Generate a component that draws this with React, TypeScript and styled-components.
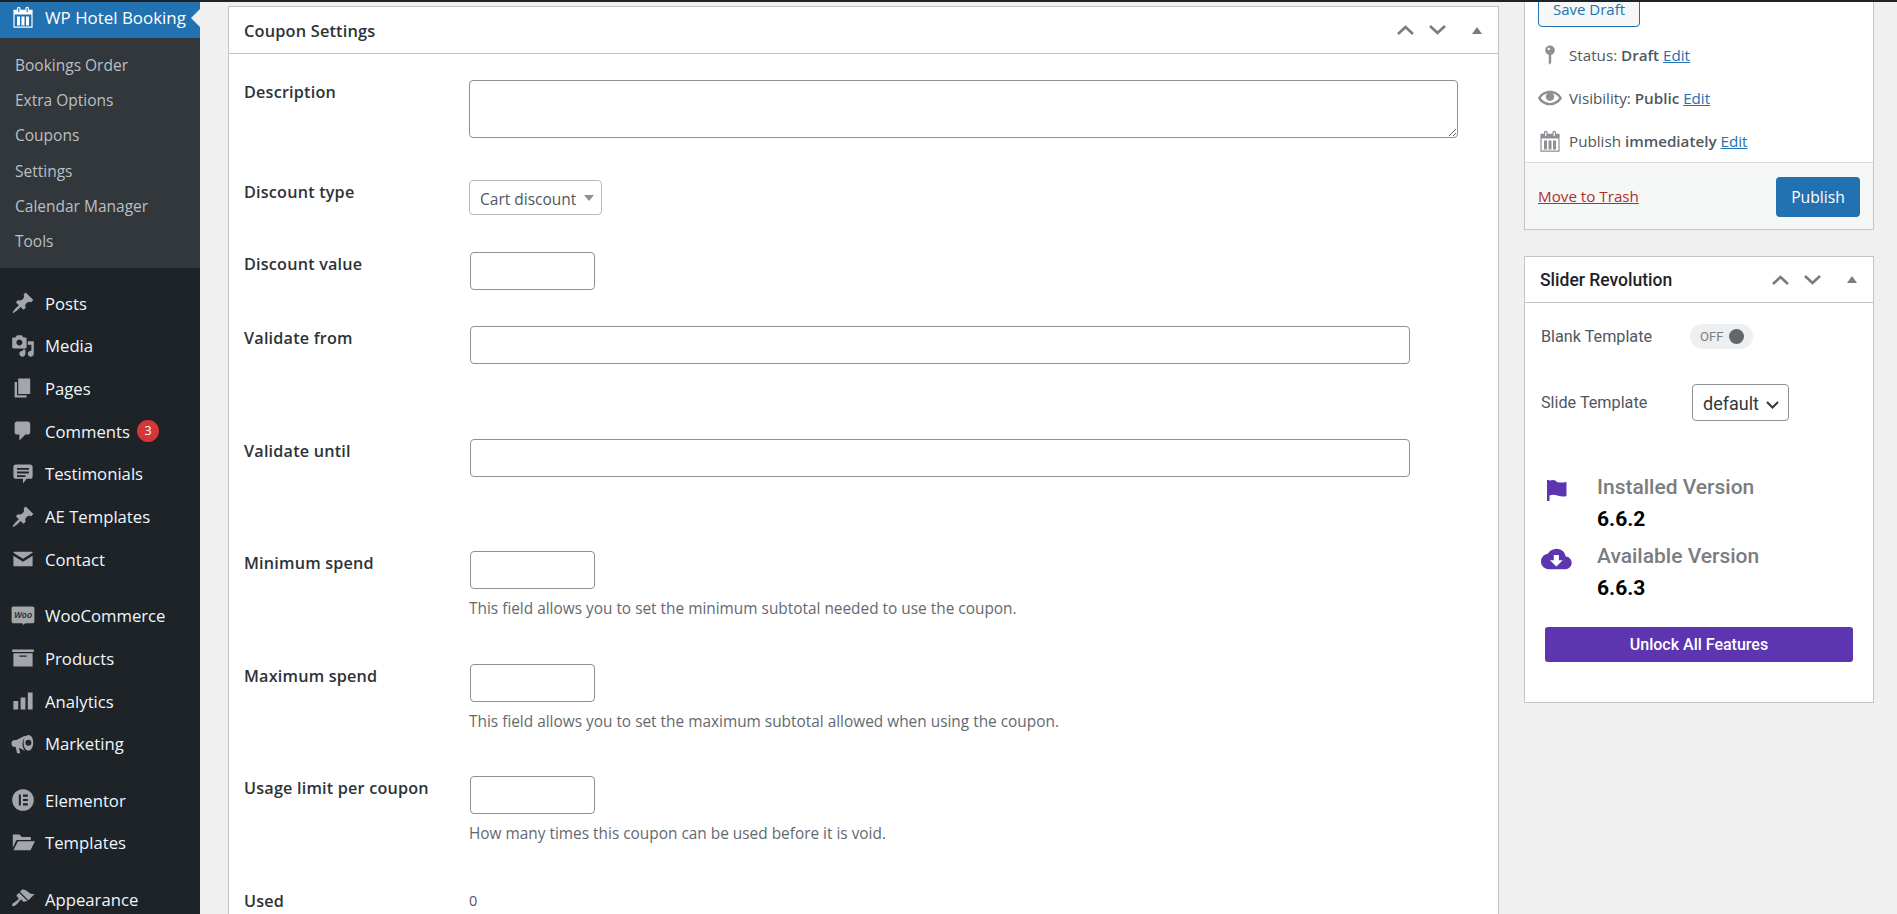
import React from 'react'
import styled, { createGlobalStyle } from 'styled-components'

const GlobalStyle = createGlobalStyle`
  html, body {
    margin: 0;
    height: 100%;
    overflow: hidden;
    background: #f0f0f1;
    font-family: "Open Sans", "Noto Sans", sans-serif;
  }
  * { box-sizing: border-box; }
`

const icons: Record<string, string> = {
  post: 'M10.44 3.02l1.82-1.82 6.36 6.35-1.83 1.82c-1.05-.68-2.48-.57-3.41.36l-.75.75c-.92.93-1.04 2.35-.35 3.41l-1.83 1.82-2.41-2.41-2.8 2.79c-.42.42-3.38 2.71-3.8 2.29s1.86-3.39 2.28-3.81l2.79-2.79L4.1 9.36l1.83-1.82c1.05.69 2.48.57 3.4-.36l.75-.75c.93-.92 1.05-2.35.36-3.41z',
  media: 'M13 11V4c0-.55-.45-1-1-1h-1.67L9 1H5L3.67 3H2c-.55 0-1 .45-1 1v7c0 .55.45 1 1 1h10c.55 0 1-.45 1-1zM7 4.5c1.38 0 2.5 1.12 2.5 2.5S8.38 9.5 7 9.5 4.5 8.38 4.5 7 5.62 4.5 7 4.5zM14 6h5v10.5c0 1.38-1.12 2.5-2.5 2.5S14 17.88 14 16.5s1.12-2.5 2.5-2.5c.17 0 .34.02.5.05V9h-3V6zm-4 8.05V13h2v3.5c0 1.38-1.12 2.5-2.5 2.5S7 17.88 7 16.5 8.12 14 9.5 14c.17 0 .34.02.5.05z',
  page: 'M6 15V2h10v13H6zm-1 1h8v2H3V5h2v11z',
  comment: 'M5 2h9c1.1 0 2 .9 2 2v7c0 1.1-.9 2-2 2h-2l-5 5v-5H5c-1.1 0-2-.9-2-2V4c0-1.1.9-2 2-2z',
  testimonial: 'M4 2h12c1.1 0 2 .9 2 2v8c0 1.1-.9 2-2 2h-3l-3 4v-4H4c-1.1 0-2-.9-2-2V4c0-1.1.9-2 2-2zm1 3v1.5h10V5H5zm0 3v1.5h10V8H5zm0 3v1.5h7V11H5z',
  email: 'M2.5 4h15c.3 0 .5.2.5.5v.3l-8 5-8-5v-.3c0-.3.2-.5.5-.5zM2 7.2l8 5 8-5V15.5c0 .3-.2.5-.5.5h-15c-.3 0-.5-.2-.5-.5V7.2z',
  archive: 'M19 3v2H1V3h18zM2 6h16v11H2V6zm11 3V8H7v1h6z',
  bars: 'M2 10h4v7H2zM8 7h4v10H8zM14 3h4v14h-4z',
  megaphone: 'M11.5 3.2L4.6 6.6H3.4a3 3 0 0 0 0 6h.5l1.2 5.2h2.6l-1.1-4.6 5 2.4c-1.2-1.3-2-3.5-2-5.6s.8-4.5 2.4-6zM14.5 2.5c-2.5 0-4 3-4 6.5s1.5 6.5 4 6.5 4-3 4-6.5-1.5-6.5-4-6.5zm0 4a2.5 2.5 0 1 1 0 5 2.5 2.5 0 0 1 0-5z',
  elementor: 'M10 1a9 9 0 1 0 0 18 9 9 0 0 0 0-18zM6.5 5.5h1.7v9H6.5v-9zM10 5.5h4v1.7h-4V5.5zm0 3.65h4v1.7h-4v-1.7zm0 3.65h4v1.7h-4v-1.7z',
  folder: 'M1.5 3h5.5l2 2h7.5v2.5H5.5c-.7 0-1.2.4-1.5 1L1.5 14V3zM5.8 8.5H20l-3.8 7.5H2z',
  appearance: 'M14.48 11.06L7.41 3.99l1.5-1.5c.5-.56 2.3-.47 3.51.32 1.21.8 1.43 1.28 2.91 2.1 1.18.64 2.45 1.26 4.45.85zm-.71.71L6.7 4.7 4.93 6.47c-.39.39-.39 1.02 0 1.41l1.06 1.06c.39.39.39 1.03 0 1.42-.6.6-1.43 1.11-2.21 1.69-.35.26-.7.53-1.01.84C1.43 13.23.4 14.98 1.2 15.8c.81.81 2.56-.22 3.91-1.57.31-.31.58-.66.84-1.01.58-.78 1.09-1.61 1.69-2.21.39-.39 1.02-.39 1.41 0l1.06 1.06c.39.39 1.02.39 1.41 0z',
  status: 'M14 6c0 1.86-1.28 3.41-3 3.86V16c0 1-2 2-2 2V9.86c-1.72-.45-3-2-3-3.86 0-2.21 1.79-4 4-4s4 1.79 4 4zM8 5c0 .55.45 1 1 1s1-.45 1-1-.45-1-1-1-1 .45-1 1z',
  eye: 'M19.7 9.4C17.7 6 14 3.9 10 3.9S2.3 6 .3 9.4L0 10l.3.6c2 3.4 5.7 5.5 9.7 5.5s7.7-2.1 9.7-5.5l.3-.6-.3-.6zM10 14.1c-3.1 0-6-1.6-7.7-4.1C3.6 8 5.7 6.6 8 6.1c-.9.6-1.5 1.7-1.5 2.9 0 1.9 1.6 3.5 3.5 3.5s3.5-1.6 3.5-3.5c0-1.2-.6-2.3-1.5-2.9 2.3.5 4.4 1.9 5.7 3.9-1.7 2.5-4.6 4.1-7.7 4.1z',
  calendar: 'M15 4h3v15H2V4h3V3c0-.41.15-.76.44-1.06.29-.29.65-.44 1.06-.44s.77.15 1.06.44c.29.3.44.65.44 1.06v1h4V3c0-.41.15-.76.44-1.06.29-.29.65-.44 1.06-.44s.77.15 1.06.44c.29.3.44.65.44 1.06v1zM6 3v2.5c0 .14.05.26.15.36.09.09.21.14.35.14s.26-.05.35-.14c.1-.1.15-.22.15-.36V3c0-.14-.05-.26-.15-.35-.09-.1-.21-.15-.35-.15s-.26.05-.35.15c-.1.09-.15.21-.15.35zm7 0v2.5c0 .14.05.26.14.36.1.09.22.14.36.14s.26-.05.36-.14c.09-.1.14-.22.14-.36V3c0-.14-.05-.26-.14-.35-.1-.1-.22-.15-.36-.15s-.26.05-.36.15c-.09.09-.14.21-.14.35zm4 15V8H3v10h14zM5 9.5h2.5V17H5V9.5zm3.75 0h2.5V17h-2.5V9.5zm3.75 0H15V17h-2.5V9.5z',
}

const Frame = styled.div`
  width: 1897px;
  height: 914px;
  display: flex;
  flex-direction: column;
  overflow: hidden;
`
const TopEdge = styled.div`
  height: 2px;
  flex: none;
  background: #1d2327;
`
const Page = styled.div`
  flex: 1;
  display: flex;
  min-height: 0;
  overflow: hidden;
`
const Sidebar = styled.nav`
  width: 200px;
  flex: none;
  background: #1d2327;
`
const ActiveItem = styled.div`
  position: relative;
  height: 36px;
  display: flex;
  align-items: center;
  padding-bottom: 6px;
  background: #2271b1;
  color: #fff;
  font-size: 16.9px;
  &::after {
    content: '';
    position: absolute;
    right: 0;
    top: 7px;
    border: 9px solid transparent;
    border-left-width: 0;
    border-right: 9px solid #f0f0f1;
  }
`
const SideIcon = styled.svg<{ $active?: boolean }>`
  width: 24px;
  height: 24px;
  margin: 0 10px 0 11px;
  flex: none;
  fill: ${(p) => (p.$active ? '#fff' : '#a3a7ab')};
`
const SubMenu = styled.ul`
  list-style: none;
  margin: 0;
  padding: 10px 0 8.8px;
  background: #32373c;
`
const SubItem = styled.li`
  height: 35.2px;
  line-height: 35.2px;
  padding-left: 15px;
  font-size: 15.5px;
  color: #bcbfc2;
`
const MenuGroup = styled.ul`
  list-style: none;
  margin: 13.8px 0 0;
  padding: 0;
`
const MenuItem = styled.li`
  height: 42.7px;
  display: flex;
  align-items: center;
  font-size: 16.7px;
  color: #f0f6fc;
`
const Badge = styled.span`
  width: 22px;
  height: 22px;
  margin-left: 7px;
  border-radius: 50%;
  background: #d63638;
  color: #fff;
  font-size: 12.5px;
  text-align: center;
  line-height: 22px;
`
const Content = styled.main`
  flex: 1;
  display: flex;
  align-items: flex-start;
  gap: 25px;
  padding: 4px 23px 0 28px;
`
const Box = styled.section`
  background: #fff;
  border: 1px solid #c3c4c7;
`
const MainBox = styled(Box)`
  width: 1271px;
  flex: none;
`
const BoxHeader = styled.header<{ $h: number }>`
  height: ${(p) => p.$h}px;
  display: flex;
  align-items: center;
  justify-content: space-between;
  padding: 0 12px 0 15px;
  border-bottom: 1px solid #c3c4c7;
`
const BoxTitle = styled.h2<{ $roboto?: boolean }>`
  margin: 0;
  font-family: ${(p) => (p.$roboto ? 'Roboto, sans-serif' : 'inherit')};
  font-size: ${(p) => (p.$roboto ? '17.5px' : '16.4px')};
  font-weight: ${(p) => (p.$roboto ? 500 : 600)};
  letter-spacing: ${(p) => (p.$roboto ? 0 : '.15px')};
  color: ${(p) => (p.$roboto ? '#1d2327' : '#2c3338')};
`
const Handles = styled.div`
  display: flex;
  align-items: center;
  gap: 15px;
`
const Chevron = styled.svg`
  width: 17px;
  height: 10px;
  fill: none;
  stroke: #787c82;
  stroke-width: 2.6;
`
const Triangle = styled.span`
  margin-left: 11px;
  margin-right: 4px;
  border: 5.5px solid transparent;
  border-top-width: 0;
  border-bottom: 7px solid #787c82;
`
const FormBody = styled.div`
  padding-top: 26px;
`
const Row = styled.div<{ $h: number }>`
  display: grid;
  grid-template-columns: 225px 1fr;
  align-items: start;
  min-height: ${(p) => p.$h}px;
  padding-left: 15px;
`
const RowLabel = styled.label`
  font-size: 16.2px;
  font-weight: 600;
  letter-spacing: .2px;
  line-height: 24px;
  color: #2c3338;
`
const Field = styled.div`
  display: flex;
  flex-direction: column;
  align-items: flex-start;
`
const TextArea = styled.textarea`
  width: 989px;
  height: 58px;
  margin: 0;
  border: 1px solid #8c8f94;
  border-radius: 4px;
  background: #fff;
  display: block;
`
const TextInput = styled.input<{ $wide?: boolean }>`
  width: ${(p) => (p.$wide ? '940px' : '125px')};
  height: 38px;
  margin: 0 0 0 1px;
  border: 1px solid #8c8f94;
  border-radius: 4px;
  background: #fff;
`
const Hint = styled.p`
  margin: 8.5px 0 0;
  font-size: 15.4px;
  line-height: 22px;
  color: #646970;
`
const Value = styled.span`
  font-size: 14.5px;
  line-height: 24px;
  color: #50575e;
`
const SelectWrap = styled.div`
  position: relative;
  display: inline-block;
`
const CouponSelect = styled.select`
  appearance: none;
  width: 133px;
  height: 35px;
  padding: 2px 0 0 10px;
  border: 1px solid #b4b9be;
  border-radius: 4px;
  background: #fff;
  color: #50575e;
  font-family: inherit;
  font-size: 15.5px;
`
const SelectArrow = styled.span`
  position: absolute;
  right: 8px;
  top: 15px;
  border: 5px solid transparent;
  border-bottom-width: 0;
  border-top: 6px solid #8c8f94;
`
const SideColumn = styled.aside`
  width: 350px;
  flex: none;
  display: flex;
  flex-direction: column;
  gap: 26px;
  margin-top: -30px;
`
const PublishTop = styled.div`
  padding: 13px 13px 0;
`
const DraftButton = styled.button`
  display: block;
  width: 102px;
  height: 37px;
  margin-bottom: 6px;
  padding: 0;
  border: 1px solid #2271b1;
  border-radius: 4px;
  background: #f6f7f7;
  color: #2271b1;
  font-family: inherit;
  font-size: 15px;
`
const MetaRow = styled.div`
  height: 43px;
  display: flex;
  align-items: center;
  font-size: 15.2px;
  color: #50575e;
  b { font-weight: 600; }
`
const MetaIcon = styled.svg`
  width: 24px;
  height: 24px;
  margin-right: 7px;
  flex: none;
  fill: #8c8f94;
`
const EditLink = styled.a`
  color: #2271b1;
  text-decoration: underline;
`
const PublishFooter = styled.div`
  height: 67px;
  display: flex;
  align-items: center;
  justify-content: space-between;
  padding: 0 13px;
  border-top: 1px solid #dcdcde;
  background: #f6f7f7;
`
const TrashLink = styled.a`
  color: #b32d2e;
  font-size: 15.2px;
  text-decoration: underline;
`
const PublishButton = styled.button`
  width: 84px;
  height: 40px;
  margin-top: 1px;
  padding: 0;
  border: 0;
  border-radius: 4px;
  background: #2271b1;
  color: #fff;
  font-family: inherit;
  font-size: 15.7px;
`
const SliderBody = styled.div`
  padding: 0 20px 40px 16px;
  font-family: Roboto, sans-serif;
`
const SliderRow = styled.div<{ $top: number }>`
  display: flex;
  align-items: center;
  height: 37px;
  margin-top: ${(p) => p.$top}px;
  font-size: 16.2px;
  color: #50575e;
`
const SliderLabel = styled.span`
  width: 150px;
  margin-right: 1px;
  flex: none;
`
const Toggle = styled.div`
  width: 63px;
  height: 25px;
  margin-left: -2px;
  display: flex;
  align-items: center;
  gap: 6px;
  padding-left: 10px;
  border-radius: 13px;
  background: #edeff0;
  color: #7a7d80;
  font-size: 13px;
`
const Knob = styled.span`
  width: 15px;
  height: 15px;
  border-radius: 50%;
  background: #63676b;
`
const TemplateSelect = styled.select`
  appearance: none;
  width: 97px;
  height: 37px;
  padding: 2px 0 0 10px;
  border: 1px solid #8c8f94;
  border-radius: 4px;
  background: #fff;
  color: #32373c;
  font-family: Roboto, sans-serif;
  font-size: 18px;
`
const SelectChevron = styled.svg`
  position: absolute;
  right: 10px;
  top: 17px;
  width: 13px;
  height: 8px;
  fill: none;
  stroke: #32373c;
  stroke-width: 2;
`
const VersionList = styled.div`
  margin-top: 50px;
  display: flex;
  flex-direction: column;
  gap: 5px;
`
const VersionItem = styled.div`
  display: grid;
  grid-template-columns: 56px 1fr;
`
const VersionIcon = styled.svg`
  width: 32px;
  height: 32px;
  fill: #5e35b1;
  margin-top: 1px;
`
const VersionName = styled.div`
  font-size: 21px;
  font-weight: 500;
  line-height: 32px;
  color: #7a7d80;
`
const VersionNumber = styled.div`
  font-size: 21px;
  font-weight: 700;
  line-height: 32px;
  color: #000;
`
const UnlockButton = styled.button`
  display: block;
  width: 308px;
  height: 35px;
  margin: 23px 0 0 4px;
  padding: 0;
  border: 0;
  border-radius: 3px;
  background: #5e35b1;
  color: #fff;
  font-family: Roboto, sans-serif;
  font-size: 16px;
  font-weight: 500;
`

const Icon = ({ name, active }: { name: string; active?: boolean }) => (
  <SideIcon viewBox="0 0 20 20" $active={active}>
    <path fillRule="evenodd" d={icons[name]} />
  </SideIcon>
)

const WooIcon = () => (
  <SideIcon viewBox="0 0 20 20">
    <path d="M2 2h16c.8 0 1.5.7 1.5 1.5v11c0 .8-.7 1.5-1.5 1.5h-6l-2 1.5-.5-1.5H2c-.8 0-1.5-.7-1.5-1.5v-11C.5 2.7 1.2 2 2 2z" />
    <text x="10" y="12" textAnchor="middle" fontSize="7.5" fontStyle="italic" fontWeight="600" fill="#1d2327" fontFamily="'Open Sans', sans-serif">Woo</text>
  </SideIcon>
)

const Meta = ({ name, children }: { name: string; children: React.ReactNode }) => (
  <MetaRow>
    <MetaIcon viewBox="0 0 20 20">
      <path fillRule="evenodd" d={icons[name]} />
    </MetaIcon>
    <span>{children}</span>
  </MetaRow>
)

const BoxControls = () => (
  <Handles>
    <Chevron viewBox="0 0 17 10"><polyline points="1,9 8.5,2 16,9" /></Chevron>
    <Chevron viewBox="0 0 17 10"><polyline points="1,1 8.5,8 16,1" /></Chevron>
    <Triangle />
  </Handles>
)

const subItems = ['Bookings Order', 'Extra Options', 'Coupons', 'Settings', 'Calendar Manager', 'Tools']

const menuGroups = [
  [
    { icon: 'post', label: 'Posts' },
    { icon: 'media', label: 'Media' },
    { icon: 'page', label: 'Pages' },
    { icon: 'comment', label: 'Comments', badge: '3' },
    { icon: 'testimonial', label: 'Testimonials' },
    { icon: 'post', label: 'AE Templates' },
    { icon: 'email', label: 'Contact' },
  ],
  [
    { icon: 'woo', label: 'WooCommerce' },
    { icon: 'archive', label: 'Products' },
    { icon: 'bars', label: 'Analytics' },
    { icon: 'megaphone', label: 'Marketing' },
  ],
  [
    { icon: 'elementor', label: 'Elementor' },
    { icon: 'folder', label: 'Templates' },
  ],
  [{ icon: 'appearance', label: 'Appearance' }],
]

export default function App() {
  return (
    <Frame>
      <GlobalStyle />
      <TopEdge />
      <Page>
        <Sidebar>
          <ActiveItem>
            <Icon name="calendar" active />
            WP Hotel Booking
          </ActiveItem>
          <SubMenu>
            {subItems.map((item) => (
              <SubItem key={item}>{item}</SubItem>
            ))}
          </SubMenu>
          {menuGroups.map((group) => (
            <MenuGroup key={group[0].label}>
              {group.map((item) => (
                <MenuItem key={item.label}>
                  {item.icon === 'woo' ? <WooIcon /> : <Icon name={item.icon} />}
                  {item.label}
                  {item.badge && <Badge>{item.badge}</Badge>}
                </MenuItem>
              ))}
            </MenuGroup>
          ))}
        </Sidebar>
        <Content>
          <MainBox>
            <BoxHeader $h={47}>
              <BoxTitle>Coupon Settings</BoxTitle>
              <BoxControls />
            </BoxHeader>
            <FormBody>
              <Row $h={100}>
                <RowLabel>Description</RowLabel>
                <Field><TextArea /></Field>
              </Row>
              <Row $h={72}>
                <RowLabel>Discount type</RowLabel>
                <Field>
                  <SelectWrap>
                    <CouponSelect defaultValue="cart">
                      <option value="cart">Cart discount</option>
                    </CouponSelect>
                    <SelectArrow />
                  </SelectWrap>
                </Field>
              </Row>
              <Row $h={74}>
                <RowLabel>Discount value</RowLabel>
                <Field><TextInput /></Field>
              </Row>
              <Row $h={112.5}>
                <RowLabel>Validate from</RowLabel>
                <Field><TextInput $wide /></Field>
              </Row>
              <Row $h={112.5}>
                <RowLabel>Validate until</RowLabel>
                <Field><TextInput $wide /></Field>
              </Row>
              <Row $h={113}>
                <RowLabel>Minimum spend</RowLabel>
                <Field>
                  <TextInput />
                  <Hint>This field allows you to set the minimum subtotal needed to use the coupon.</Hint>
                </Field>
              </Row>
              <Row $h={112}>
                <RowLabel>Maximum spend</RowLabel>
                <Field>
                  <TextInput />
                  <Hint>This field allows you to set the maximum subtotal allowed when using the coupon.</Hint>
                </Field>
              </Row>
              <Row $h={113}>
                <RowLabel>Usage limit per coupon</RowLabel>
                <Field>
                  <TextInput />
                  <Hint>How many times this coupon can be used before it is void.</Hint>
                </Field>
              </Row>
              <Row $h={40}>
                <RowLabel>Used</RowLabel>
                <Value>0</Value>
              </Row>
            </FormBody>
          </MainBox>
          <SideColumn>
            <Box>
              <PublishTop>
                <DraftButton>Save Draft</DraftButton>
                <Meta name="status">Status: <b>Draft</b> <EditLink>Edit</EditLink></Meta>
                <Meta name="eye">Visibility: <b>Public</b> <EditLink>Edit</EditLink></Meta>
                <Meta name="calendar">Publish <b>immediately</b> <EditLink>Edit</EditLink></Meta>
              </PublishTop>
              <PublishFooter>
                <TrashLink>Move to Trash</TrashLink>
                <PublishButton>Publish</PublishButton>
              </PublishFooter>
            </Box>
            <Box>
              <BoxHeader $h={46}>
                <BoxTitle $roboto>Slider Revolution</BoxTitle>
                <BoxControls />
              </BoxHeader>
              <SliderBody>
                <SliderRow $top={15}>
                  <SliderLabel>Blank Template</SliderLabel>
                  <Toggle>OFF<Knob /></Toggle>
                </SliderRow>
                <SliderRow $top={29}>
                  <SliderLabel>Slide Template</SliderLabel>
                  <SelectWrap>
                    <TemplateSelect defaultValue="default">
                      <option value="default">default</option>
                    </TemplateSelect>
                    <SelectChevron viewBox="0 0 13 8"><polyline points="1,1 6.5,6.5 12,1" /></SelectChevron>
                  </SelectWrap>
                </SliderRow>
                <VersionList>
                  <VersionItem>
                    <VersionIcon viewBox="0 0 32 32">
                      <path d="M6 8h2.5v21H6zM8.5 9c2-1.5 4-1 6-.5l1.5 1.5c3 1 6 .5 9.5 0v14c-3 1-6 .5-9-.5s-5.5-1-8 0z" />
                    </VersionIcon>
                    <div>
                      <VersionName>Installed Version</VersionName>
                      <VersionNumber>6.6.2</VersionNumber>
                    </div>
                  </VersionItem>
                  <VersionItem>
                    <VersionIcon viewBox="0 -2 25 25">
                      <path d="M19.35 10.04A7.49 7.49 0 0 0 12 4C9.11 4 6.6 5.64 5.35 8.04A5.994 5.994 0 0 0 0 14c0 3.31 2.69 6 6 6h13c2.76 0 5-2.24 5-5 0-2.64-2.05-4.78-4.65-4.96zM17 13l-5 5-5-5h3V9h4v4h3z" />
                    </VersionIcon>
                    <div>
                      <VersionName>Available Version</VersionName>
                      <VersionNumber>6.6.3</VersionNumber>
                    </div>
                  </VersionItem>
                </VersionList>
                <UnlockButton>Unlock All Features</UnlockButton>
              </SliderBody>
            </Box>
          </SideColumn>
        </Content>
      </Page>
    </Frame>
  )
}
